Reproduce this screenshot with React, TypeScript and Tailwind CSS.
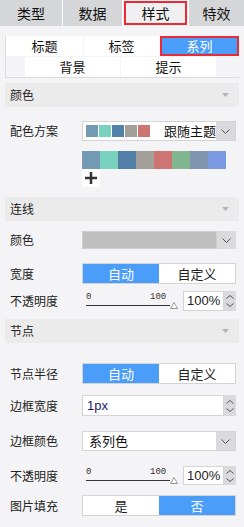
import React from 'react';

const FONT = '"Noto Sans CJK SC", "Liberation Sans", sans-serif';

const SWATCHES = [
  '#7399b4',
  '#78d2be',
  '#5380a8',
  '#a3a09a',
  '#cc7573',
  '#82b690',
  '#8096b0',
  '#7b99e0',
];

function Chevron({ up }: { up?: boolean }) {
  return (
    <svg width="9" height="5" viewBox="0 0 9 5" className={up ? 'rotate-180' : ''}>
      <path d="M0.5 0.5 L4.5 4.5 L8.5 0.5" fill="none" stroke="#555" strokeWidth="1" />
    </svg>
  );
}

function SectionHeader({ title }: { title: string }) {
  return (
    <div className="mx-[5px] h-[24px] bg-[#ebebeb] flex items-center justify-between pl-[5px] pr-[10px]">
      <span className="text-[12px] text-[#222]">{title}</span>
      <svg width="7" height="4" viewBox="0 0 7 4">
        <path d="M0 0 L7 0 L3.5 4 Z" fill="#b3b3b3" />
      </svg>
    </div>
  );
}

function Row({
  label,
  height,
  children,
}: {
  label: string;
  height: number;
  children: React.ReactNode;
}) {
  return (
    <div className="flex items-center pl-[10px] pr-[8px]" style={{ height }}>
      <span className="w-[72px] text-[12px] text-[#222] shrink-0">{label}</span>
      <div className="flex-1 h-full">{children}</div>
    </div>
  );
}

function DropBtn() {
  return (
    <div className="w-[19px] h-full bg-[#dadadc] flex items-center justify-center shrink-0">
      <Chevron />
    </div>
  );
}

function Spinner() {
  return (
    <div className="w-[12px] h-full bg-[#dadadc] flex flex-col items-center justify-center gap-[4px] shrink-0">
      <svg width="8" height="4" viewBox="0 0 8 4">
        <path d="M0.5 3.5 L4 0.5 L7.5 3.5" fill="none" stroke="#555" />
      </svg>
      <svg width="8" height="4" viewBox="0 0 8 4">
        <path d="M0.5 0.5 L4 3.5 L7.5 0.5" fill="none" stroke="#555" />
      </svg>
    </div>
  );
}

function Toggle({ left, right, active }: { left: string; right: string; active: 0 | 1 }) {
  return (
    <div className="h-full border border-[#d4d4d4] flex bg-white">
      <div
        className={`flex-1 flex items-center justify-center text-[13px] ${
          active === 0 ? 'bg-[#4a9df8] text-white' : 'text-[#222]'
        }`}
      >
        {left}
      </div>
      <div
        className={`flex-1 flex items-center justify-center text-[13px] ${
          active === 1 ? 'bg-[#4a9df8] text-white' : 'text-[#222]'
        }`}
      >
        {right}
      </div>
    </div>
  );
}

function Opacity() {
  return (
    <div className="h-full flex items-center">
      <div className="w-[97px] h-full relative">
        <div className="absolute left-[4px] top-[2px] font-mono text-[9px] text-[#333] leading-none">0</div>
        <div className="absolute left-[68px] top-[2px] font-mono text-[9px] text-[#333] leading-none">100</div>
        <div className="absolute left-[4px] top-[14px] w-[84px] h-px bg-[#333]" />
        <svg className="absolute left-[88px] top-[11px]" width="8" height="7" viewBox="0 0 8 7">
          <path d="M4 0.5 L7.5 6.5 L0.5 6.5 Z" fill="#fff" stroke="#999" />
        </svg>
      </div>
      <div className="ml-[4px] w-[41px] h-full bg-white border border-[#d4d4d4] flex items-center pl-[3px] text-[13px] text-[#222]" style={{ fontFamily: '"Liberation Sans", sans-serif' }}>
        100%
      </div>
      <Spinner />
    </div>
  );
}

export default function App() {
  return (
    <div
      className="w-[244px] h-[527px] bg-[#f4f4f6] overflow-hidden"
      style={{ fontFamily: FONT }}
    >
      {/* top tabs */}
      <div className="flex h-[26px] bg-white gap-px">
        <div className="w-[62px] bg-[#d5d6d8] flex items-center justify-center text-[14px] text-[#111]">类型</div>
        <div className="w-[59px] bg-[#d5d6d8] flex items-center justify-center text-[14px] text-[#111]">数据</div>
        <div className="w-[65px] bg-[#f0f0f2] flex p-[1px] pb-[1px]">
          <div className="flex-1 border-2 border-[#ea2b36] flex items-center justify-center text-[14px] text-[#111]">样式</div>
        </div>
        <div className="flex-1 bg-[#d5d6d8] flex items-center justify-center text-[14px] text-[#111]">特效</div>
      </div>

      {/* sub tabs */}
      <div className="mt-[10px] mx-[5px] h-[42px] border-b border-l border-[#dcdcdc] flex flex-col gap-px">
        <div className="h-[20px] flex gap-px">
          <div className="w-[77px] bg-white flex items-center justify-center text-[13px] text-[#111]">标题</div>
          <div className="w-[75px] bg-white flex items-center justify-center text-[13px] text-[#111]">标签</div>
          <div className="flex-1 bg-[#4a9df8] border-2 border-[#ea2b36] flex items-center justify-center text-[13px] text-white">系列</div>
        </div>
        <div className="h-[20px] flex gap-px pl-[19px]">
          <div className="w-[95px] bg-white flex items-center justify-center text-[13px] text-[#111]">背景</div>
          <div className="w-[95px] bg-white flex items-center justify-center text-[13px] text-[#111]">提示</div>
        </div>
      </div>

      <div className="h-[5px]" />
      <SectionHeader title="颜色" />
      <div className="h-[14px]" />
      <Row label="配色方案" height={20}>
        <div className="h-full flex border border-[#d4d4d4] bg-white">
          <div className="flex-1 flex items-center pl-[3px] gap-px">
            {SWATCHES.slice(0, 5).map((c) => (
              <div key={c} className="w-[12px] h-[12px]" style={{ background: c }} />
            ))}
            <span className="ml-[13px] text-[13px] text-[#111]">跟随主题</span>
          </div>
          <DropBtn />
        </div>
      </Row>
      <div className="h-[10px]" />
      <div className="pl-[82px] flex h-[18px]">
        {SWATCHES.map((c) => (
          <div key={c} className="w-[18px] h-full" style={{ background: c }} />
        ))}
      </div>
      <div className="pl-[82px] h-[18px]">
        <div className="w-[18px] h-full bg-white flex items-center justify-center">
          <svg width="12" height="12" viewBox="0 0 12 12">
            <path d="M6 0 V12 M0 6 H12" stroke="#333" strokeWidth="2.5" />
          </svg>
        </div>
      </div>

      <div className="h-[10px]" />
      <SectionHeader title="连线" />
      <div className="h-[10px]" />
      <Row label="颜色" height={18}>
        <div className="h-full flex">
          <div className="flex-1 bg-[#bfbfbf] border border-[#d0d0d0]" />
          <DropBtn />
        </div>
      </Row>
      <div className="h-[14px]" />
      <Row label="宽度" height={21}>
        <Toggle left="自动" right="自定义" active={0} />
      </Row>
      <div className="h-[7px]" />
      <Row label="不透明度" height={20}>
        <Opacity />
      </Row>
      <div className="h-[8px]" />
      <SectionHeader title="节点" />
      <div className="h-[20px]" />
      <Row label="节点半径" height={21}>
        <Toggle left="自动" right="自定义" active={0} />
      </Row>
      <div className="h-[11px]" />
      <Row label="边框宽度" height={21}>
        <div className="h-full flex">
          <div
            className="flex-1 bg-white border border-[#d4d4d4] flex items-center pl-[4px] text-[13px] text-[#1a1a6a]"
            style={{ fontFamily: '"Liberation Sans", sans-serif' }}
          >
            1px
          </div>
          <Spinner />
        </div>
      </Row>
      <div className="h-[15px]" />
      <Row label="边框颜色" height={20}>
        <div className="h-full flex border border-[#d4d4d4] bg-white">
          <div className="flex-1 flex items-center pl-[6px] text-[13px] text-[#111]">系列色</div>
          <DropBtn />
        </div>
      </Row>
      <div className="h-[15px]" />
      <Row label="不透明度" height={19}>
        <Opacity />
      </Row>
      <div className="h-[10px]" />
      <Row label="图片填充" height={21}>
        <Toggle left="是" right="否" active={1} />
      </Row>
    </div>
  );
}
